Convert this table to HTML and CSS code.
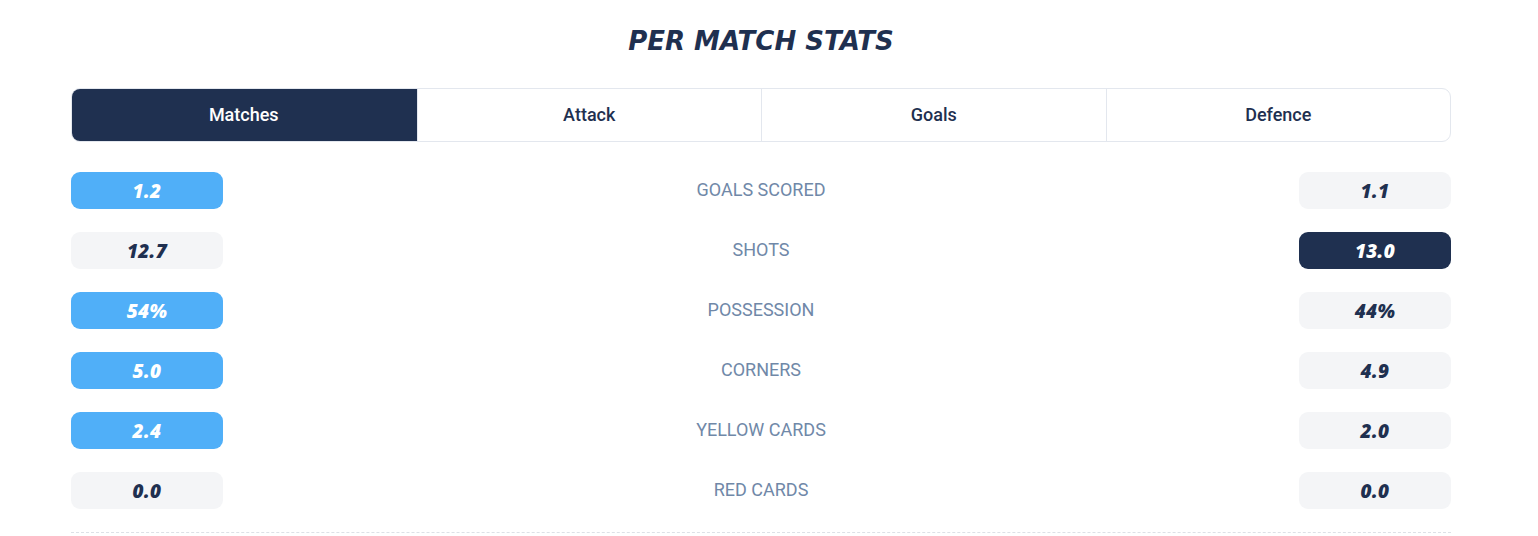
FILE: index.html
```html
<!DOCTYPE html>
<html>
<head>
<meta charset="utf-8">
<link rel="stylesheet" href="styles.css">
</head>
<body>
<div class="wrap">
  <h2 class="title">PER MATCH STATS</h2>
  <div class="tabs">
    <div class="tab active">Matches</div>
    <div class="tab">Attack</div>
    <div class="tab">Goals</div>
    <div class="tab">Defence</div>
  </div>
  <div class="rows">
    <div class="row"><div class="pill blue">1.2</div><div class="label">GOALS SCORED</div><div class="pill grey">1.1</div></div>
    <div class="row"><div class="pill grey">12.7</div><div class="label">SHOTS</div><div class="pill dark">13.0</div></div>
    <div class="row"><div class="pill blue">54%</div><div class="label">POSSESSION</div><div class="pill grey">44%</div></div>
    <div class="row"><div class="pill blue">5.0</div><div class="label">CORNERS</div><div class="pill grey">4.9</div></div>
    <div class="row"><div class="pill blue">2.4</div><div class="label">YELLOW CARDS</div><div class="pill grey">2.0</div></div>
    <div class="row"><div class="pill grey">0.0</div><div class="label">RED CARDS</div><div class="pill grey">0.0</div></div>
  </div>
  <div class="divider"></div>
</div>
</body>
</html>
```
FILE: styles.css
```css
html, body {
  margin: 0;
  padding: 0;
  background: #ffffff;
}
.wrap {
  width: 1380px;
  margin-left: 71px;
  font-family: Roboto, "Liberation Sans", sans-serif;
}
.title {
  margin: 0;
  padding-top: 24px;
  height: 88px;
  box-sizing: border-box;
  text-align: center;
  font-family: "DejaVu Sans", "Open Sans", sans-serif;
  font-style: italic;
  font-weight: 700;
  font-size: 26px;
  line-height: 34px;
  color: #1f3050;
}
.tabs {
  display: grid;
  grid-template-columns: repeat(4, 1fr);
  height: 54px;
  border: 1px solid #e3e7ee;
  border-radius: 9px;
  box-sizing: border-box;
  overflow: hidden;
}
.tab {
  display: flex;
  align-items: center;
  justify-content: center;
  padding-bottom: 2px;
  font-size: 18px;
  font-weight: 500;
  color: #1f3050;
  border-left: 1px solid #e3e7ee;
}
.tab:first-child {
  border-left: none;
}
.tab.active {
  background: #1f3050;
  color: #ffffff;
  margin: -1px 0 -1px -1px;
}
.rows {
  display: flex;
  flex-direction: column;
  gap: 23px;
  padding-top: 30px;
}
.row {
  display: flex;
  align-items: center;
  justify-content: space-between;
  height: 37px;
}
.pill {
  width: 152px;
  height: 37px;
  border-radius: 9px;
  display: flex;
  align-items: center;
  justify-content: center;
  font-family: "Open Sans", "Liberation Sans", sans-serif;
  font-style: italic;
  font-weight: 800;
  font-size: 19px;
  letter-spacing: 0.3px;
}
.pill.blue {
  background: #50aff8;
  color: #ffffff;
}
.pill.grey {
  background: #f4f5f7;
  color: #1f3050;
}
.pill.dark {
  background: #1f3050;
  color: #ffffff;
}
.label {
  font-size: 18px;
  color: #7088a8;
  text-align: center;
  padding-bottom: 2px;
}
.divider {
  margin-top: 23px;
  border-top: 1px dashed #dde1e7;
}
```
